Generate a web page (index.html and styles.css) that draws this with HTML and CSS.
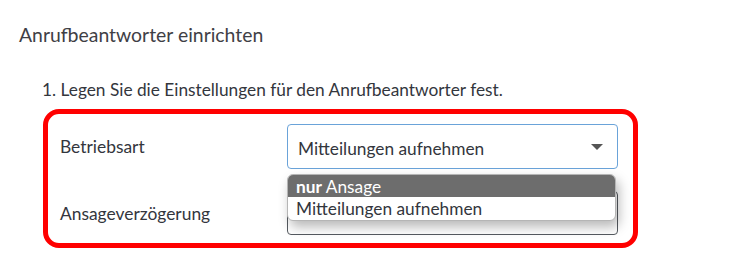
FILE: index.html
```html
<!DOCTYPE html>
<html lang="de">
<head>
<meta charset="utf-8">
<link rel="stylesheet" href="styles.css">
</head>
<body>
<h1 class="title">Anrufbeantworter einrichten</h1>
<p class="step">1. Legen Sie die Einstellungen für den Anrufbeantworter fest.</p>
<div class="box">
  <div class="label label-first">Betriebsart</div>
  <div class="control">
    <div class="select">
      <span class="select-text">Mitteilungen aufnehmen</span>
      <span class="arrow"></span>
    </div>
    <ul class="menu">
      <li class="opt opt-active"><b>nur</b> Ansage</li>
      <li class="opt">Mitteilungen aufnehmen</li>
    </ul>
  </div>
  <div class="label">Ansageverzögerung</div>
  <div class="control">
    <div class="input"></div>
  </div>
</div>
</body>
</html>
```
FILE: styles.css
```css
html, body {
  margin: 0;
  padding: 0;
  background: #ffffff;
}
body {
  font-family: Lato, "Open Sans", sans-serif;
  color: #33363d;
  width: 731px;
  height: 258px;
  overflow: hidden;
}
.title {
  margin: 0;
  padding: 23px 0 0 19px;
  font-size: 19.4px;
  line-height: 24px;
  font-weight: 400;
  color: #3f3f46;
}
.step {
  margin: 0;
  padding: 32px 0 0 42px;
  font-size: 17.3px;
  line-height: 22px;
}
.box {
  box-sizing: border-box;
  margin: 8px 0 0 43px;
  width: 595px;
  height: 139px;
  border: 5px solid #ff0000;
  border-radius: 16px;
  padding: 10px 15px 8px 12px;
  display: grid;
  grid-template-columns: 227px 1fr;
  grid-template-rows: 45px 44px;
  row-gap: 22px;
}
.label {
  font-size: 17.4px;
  line-height: 22px;
  padding-top: 12px;
}
.control {
  position: relative;
}
.select {
  box-sizing: border-box;
  height: 45px;
  border: 1px solid #6aa3d9;
  border-radius: 4px;
  display: flex;
  align-items: center;
  justify-content: space-between;
  padding: 3px 14px 0 10px;
  font-size: 17.3px;
}
.arrow {
  width: 0;
  height: 0;
  border-left: 6px solid transparent;
  border-right: 6px solid transparent;
  border-top: 6px solid #555555;
  margin-top: -3px;
}
.input {
  box-sizing: border-box;
  height: 44px;
  border: 1px solid #555a60;
  border-radius: 4px;
}
.menu {
  position: absolute;
  z-index: 2;
  top: 50px;
  left: 0;
  width: 327px;
  margin: 0;
  padding: 0;
  list-style: none;
  background: #ffffff;
  border: 1px solid #b5b5b5;
  border-radius: 6px;
  overflow: hidden;
  box-shadow: 3px 6px 12px rgba(0, 0, 0, 0.28);
  font-size: 17.3px;
}
.opt {
  height: 22px;
  line-height: 24px;
  padding: 0 0 0 8px;
}
.opt + .opt {
  height: 23px;
  line-height: 23px;
}
.opt-active {
  background: #6d6d6d;
  color: #ffffff;
}
.opt-active b {
  font-weight: 700;
}
```
